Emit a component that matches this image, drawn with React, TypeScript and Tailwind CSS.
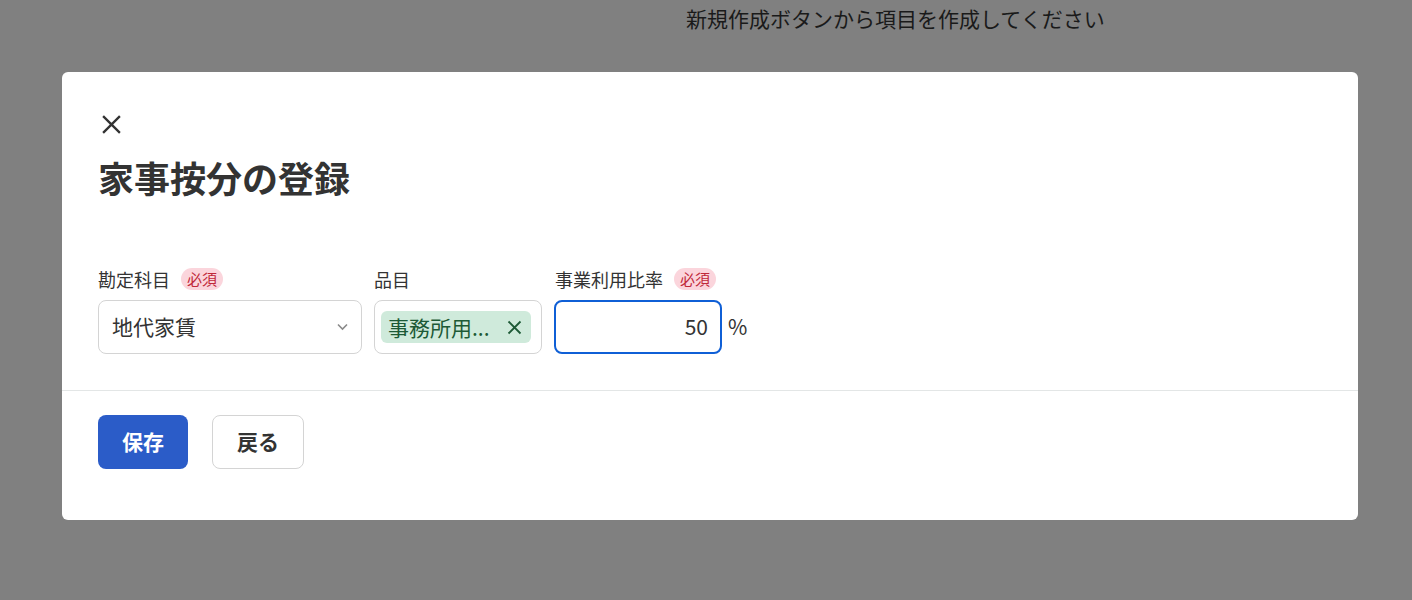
import React from "react";

const font = { fontFamily: '"Noto Sans CJK JP", "Noto Sans", sans-serif' };

function XIcon({ size, color, stroke }: { size: number; color: string; stroke: number }) {
  return (
    <svg width={size} height={size} viewBox="0 0 20 20" fill="none">
      <path d="M2 2 L18 18 M18 2 L2 18" stroke={color} strokeWidth={stroke} strokeLinecap="butt" />
    </svg>
  );
}

export default function App() {
  return (
    <div className="relative w-[1412px] h-[600px] bg-[#808080] overflow-hidden" style={font}>
      <div className="absolute left-[686px] top-[3px] text-[21px] leading-[30px] text-[#1a1a1a]">
        新規作成ボタンから項目を作成してください
      </div>
      <div className="absolute left-[62px] top-[72px] w-[1296px] h-[448px] bg-white rounded-[6px] flex flex-col">
        <div className="px-[36px] pt-[40px]">
          <div className="w-[24px] h-[24px] flex items-center justify-center ml-[1px]">
            <XIcon size={21} color="#333333" stroke={2.2} />
          </div>
          <h1 className="mt-[19px] text-[36px] leading-[44px] font-bold text-[#333333]">家事按分の登録</h1>
        </div>
        <div className="px-[36px] pt-[69px] pb-[36px] flex items-end gap-[12px] border-b border-[#e3e6e6]">
          <div className="flex flex-col w-[264px]">
            <div className="flex items-center h-[22px] mb-[10px]">
              <span className="text-[18px] leading-[22px] text-[#333333]">勘定科目</span>
              <span className="ml-[11px] h-[22px] px-[6px] rounded-full bg-[#fbd5dc] text-[#c0283a] text-[15px] leading-[22px]">必須</span>
            </div>
            <div className="h-[54px] border border-[#d4d4d4] rounded-[8px] flex items-center pl-[13px] pr-[13px] justify-between">
              <span className="text-[21px] text-[#333333]">地代家賃</span>
              <svg width="11" height="8" viewBox="0 0 11 8" fill="none">
                <path d="M1 1.5 L5.5 6 L10 1.5" stroke="#8a8a8a" strokeWidth="1.6" />
              </svg>
            </div>
          </div>
          <div className="flex flex-col w-[168px]">
            <div className="flex items-center h-[22px] mb-[10px]">
              <span className="text-[18px] leading-[22px] text-[#333333]">品目</span>
            </div>
            <div className="h-[54px] border border-[#d4d4d4] rounded-[8px] flex items-center pl-[6px]">
              <div className="h-[32px] w-[150px] rounded-[6px] bg-[#cfeadb] flex items-center pl-[7px] pr-[9px] justify-between">
                <span className="text-[21px] text-[#1d5a36] leading-[32px]">事務所用...</span>
                <XIcon size={15} color="#1d5a36" stroke={2.4} />
              </div>
            </div>
          </div>
          <div className="flex flex-col">
            <div className="flex items-center h-[22px] mb-[10px] pl-[1px]">
              <span className="text-[18px] leading-[22px] text-[#333333]">事業利用比率</span>
              <span className="ml-[11px] h-[22px] px-[6px] rounded-full bg-[#fbd5dc] text-[#c0283a] text-[15px] leading-[22px]">必須</span>
            </div>
            <div className="flex items-center">
              <div className="h-[54px] w-[168px] border-2 border-[#0f5fd6] rounded-[8px] flex items-center justify-end pr-[12px]">
                <span className="text-[21px] text-[#333333]">50</span>
              </div>
              <span className="ml-[6px] text-[21px] text-[#333333]">%</span>
            </div>
          </div>
        </div>
        <div className="px-[36px] pt-[24px] flex gap-[24px]">
          <button className="h-[54px] w-[90px] rounded-[8px] bg-[#2b5cc8] text-white text-[21px] font-bold">保存</button>
          <button className="h-[54px] w-[92px] rounded-[8px] bg-white border border-[#d4d4d4] text-[#333333] text-[21px] font-bold">戻る</button>
        </div>
      </div>
    </div>
  );
}
